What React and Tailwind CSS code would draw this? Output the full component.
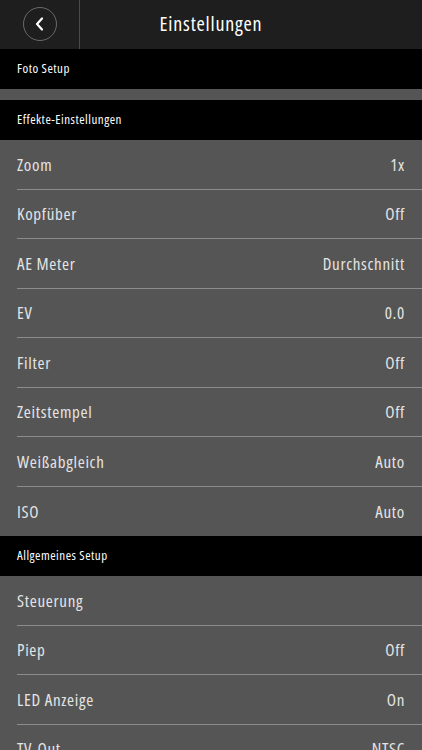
import React from "react";

function Section({ title }) {
  return (
    <div className="h-[40px] bg-black flex items-center pl-[17px] text-[13px] tracking-[0.5px] text-white">
      {title}
    </div>
  );
}

function Row({ label, value, last }) {
  return (
    <div className="h-[49.5px] bg-[#555555] pl-[17px] flex flex-col">
      <div className="flex-1 flex items-center justify-between pr-[17px] text-[17px] tracking-[0.7px] text-[#e4e4e4]">
        <span>{label}</span>
        <span>{value}</span>
      </div>
      {!last && <div className="h-px bg-[#8c8c8c]" />}
    </div>
  );
}

export default function App() {
  const effekte = [
    ["Zoom", "1x"],
    ["Kopfüber", "Off"],
    ["AE Meter", "Durchschnitt"],
    ["EV", "0.0"],
    ["Filter", "Off"],
    ["Zeitstempel", "Off"],
    ["Weißabgleich", "Auto"],
    ["ISO", "Auto"],
  ];
  const allg = [
    ["Steuerung", ""],
    ["Piep", "Off"],
    ["LED Anzeige", "On"],
    ["TV-Out", "NTSC"],
  ];
  return (
    <div className="w-[422px] h-[750px] overflow-hidden bg-[#555555] font-['Open_Sans',sans-serif] font-stretch-semi-condensed font-normal">
      <div className="h-[49px] bg-[#1e1e1e] flex">
        <div className="w-[79px] flex items-center justify-center">
          <div className="w-[34px] h-[34px] rounded-full border border-[#6a6a6a] flex items-center justify-center -mt-[1px]">
            <svg width="16" height="16" viewBox="0 0 16 16" fill="none">
              <path d="M10 2.5 L5 8 L10 13.5" stroke="white" strokeWidth="2.2" strokeLinecap="round" strokeLinejoin="round" />
            </svg>
          </div>
        </div>
        <div className="w-px bg-[#4a4a4a]" />
        <div className="flex-1 flex items-center justify-center pr-[80px] text-[20px] tracking-[0.8px] text-white -mt-[2px]">
          Einstellungen
        </div>
      </div>
      <Section title="Foto Setup" />
      <div className="h-[11px] bg-[#555555]" />
      <Section title="Effekte-Einstellungen" />
      {effekte.map(([l, v], i) => (
        <Row key={l} label={l} value={v} last={i === effekte.length - 1} />
      ))}
      <Section title="Allgemeines Setup" />
      {allg.map(([l, v]) => (
        <Row key={l} label={l} value={v} />
      ))}
    </div>
  );
}
